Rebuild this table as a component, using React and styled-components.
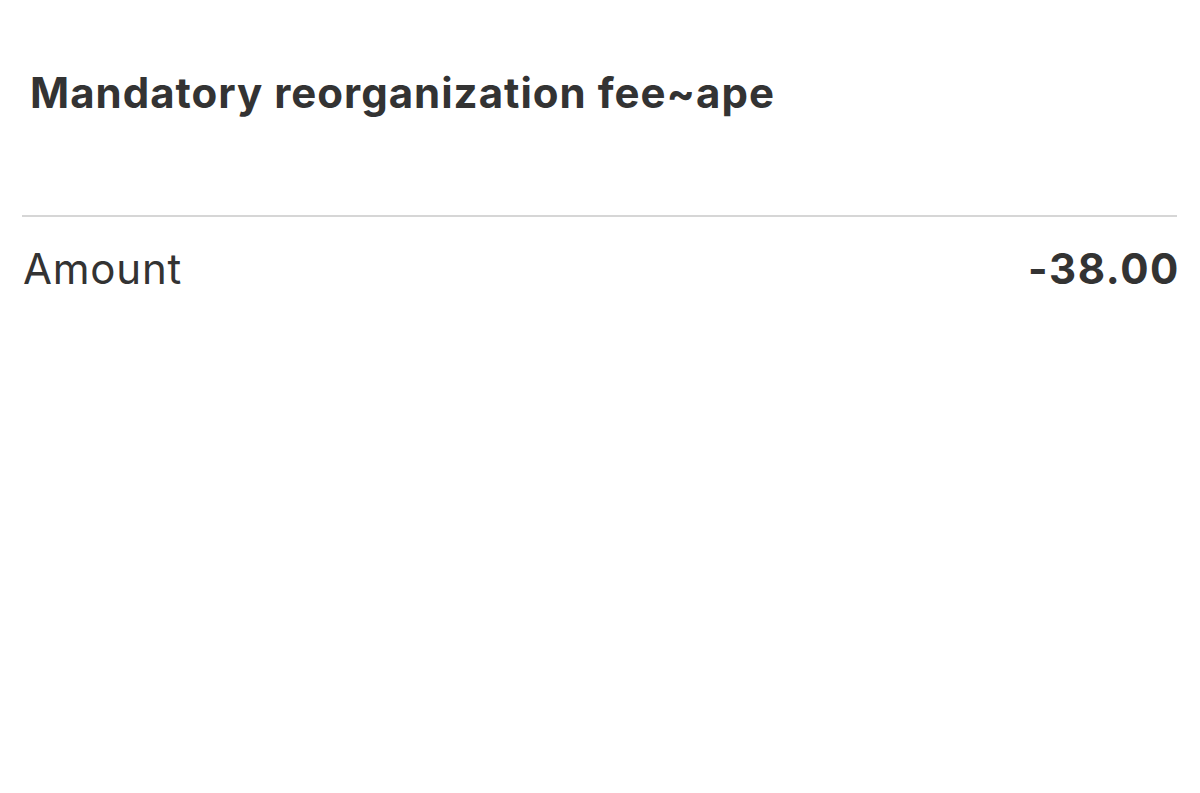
import React from "react";
import styled, { createGlobalStyle } from "styled-components";

const Global = createGlobalStyle`
  html, body { margin: 0; padding: 0; background: #ffffff; }
  body { font-family: Inter, "Noto Sans", "Liberation Sans", sans-serif; color: #333333; }
`;

const Page = styled.div`
  display: flex;
  flex-direction: column;
  padding: 0 23px 0 22px;
`;

const Header = styled.header`
  height: 217px;
  box-sizing: border-box;
  padding: 67px 0 0 8px;
  border-bottom: 2px solid #d6d6d6;
`;

const Title = styled.h1`
  margin: 0;
  font-size: 42px;
  line-height: 52px;
  font-weight: 700;
  color: #333333;
  letter-spacing: 1px;
`;

const Row = styled.div`
  display: flex;
  justify-content: space-between;
  align-items: center;
  padding: 26px 0 0 1px;
`;

const Label = styled.span`
  font-size: 42px;
  line-height: 52px;
  font-weight: 400;
  color: #333333;
  letter-spacing: 0.8px;
`;

const Value = styled.span`
  font-size: 42px;
  line-height: 52px;
  font-weight: 700;
  color: #333333;
  letter-spacing: 1.6px;
  margin-right: -3px;
`;

export default function App() {
  return (
    <>
      <Global />
      <Page>
        <Header>
          <Title>Mandatory reorganization fee~ape</Title>
        </Header>
        <Row>
          <Label>Amount</Label>
          <Value>-38.00</Value>
        </Row>
      </Page>
    </>
  );
}
